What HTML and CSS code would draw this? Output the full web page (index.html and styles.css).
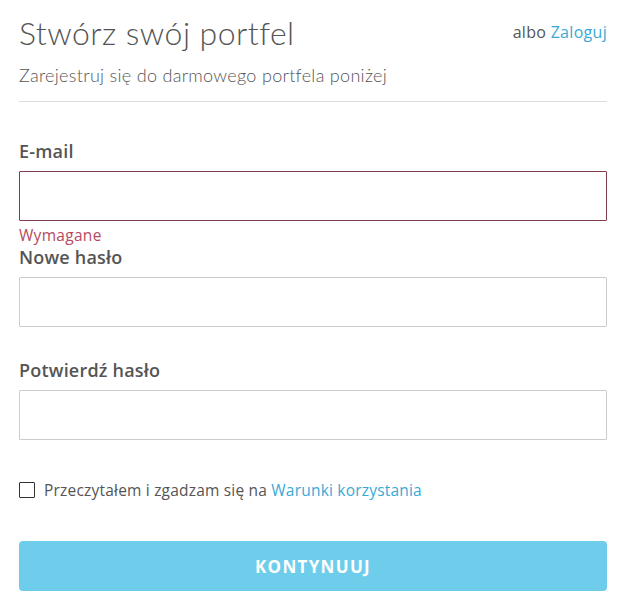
FILE: index.html
```html
<!DOCTYPE html>
<html lang="pl">
<head>
<meta charset="utf-8">
<link rel="stylesheet" href="styles.css">
</head>
<body>
<div class="page">
  <div class="head">
    <h1 class="title">Stwórz swój portfel</h1>
    <div class="alt">albo <a href="#" class="link">Zaloguj</a></div>
  </div>
  <p class="sub">Zarejestruj się do darmowego portfela poniżej</p>
  <hr class="rule">
  <form class="form">
    <div class="field">
      <label class="label">E-mail</label>
      <input class="input input-error" type="email">
      <div class="error">Wymagane</div>
    </div>
    <div class="field field-tight">
      <label class="label">Nowe hasło</label>
      <input class="input" type="password">
    </div>
    <div class="field field-next">
      <label class="label">Potwierdź hasło</label>
      <input class="input" type="password">
    </div>
    <label class="terms"><span class="box"></span><span>Przeczytałem i zgadzam się na <a href="#" class="link">Warunki korzystania</a></span></label>
    <button type="button" class="btn">KONTYNUUJ</button>
  </form>
</div>
</body>
</html>
```
FILE: styles.css
```css
* { box-sizing: border-box; }
html, body { margin: 0; padding: 0; background: #fff; }
body { font-family: "Lato", "Liberation Sans", sans-serif; color: #555; }
.page { padding: 13px 17px 0 19px; }
.head { display: flex; justify-content: space-between; align-items: flex-start; }
.title { margin: 0; font-weight: 300; font-size: 32px; line-height: 40px; color: #555; letter-spacing: 0.45px; }
.alt { font-family: "Open Sans", sans-serif; font-size: 16px; line-height: 22px; padding-top: 8px; color: #555; letter-spacing: 0.3px; }
.link { color: #38a9d6; text-decoration: none; }
.sub { margin: 11px 0 0; font-size: 18px; font-weight: 300; line-height: 22px; color: #555; letter-spacing: 0.3px; }
.rule { margin: 15px 0 0; border: 0; border-top: 1px solid #ddd; }
.form { display: flex; flex-direction: column; }
.field { display: flex; flex-direction: column; margin-top: 38px; }
.field-tight { margin-top: 1px; }
.field-next { margin-top: 32px; }
.label { font-family: "Open Sans", sans-serif; font-weight: 600; font-size: 18px; line-height: 22px; color: #555; margin-bottom: 9px; letter-spacing: 0.2px; }
.input { height: 50px; border: 1px solid #ccc; border-radius: 1px; font-size: 16px; outline: none; background: #fff; }
.input-error { border-color: #7d3d4a; }
.error { font-family: "Open Sans", sans-serif; font-size: 15.5px; line-height: 20px; color: #b54a60; margin-top: 4px; letter-spacing: 0.3px; }
.terms { display: flex; align-items: center; gap: 9px; margin-top: 39px; font-family: "Open Sans", sans-serif; font-size: 15.5px; color: #555; line-height: 22px; letter-spacing: 0.2px; }
.box { width: 16px; height: 16px; border: 1.3px solid #333; border-radius: 1px; flex: none; }
.btn { margin-top: 40px; height: 50px; border: 0; border-radius: 4px; background: #6fcdec; color: #fff; font-family: "Open Sans", sans-serif; font-weight: 700; font-size: 17px; letter-spacing: 1.3px; padding: 0; }
```
